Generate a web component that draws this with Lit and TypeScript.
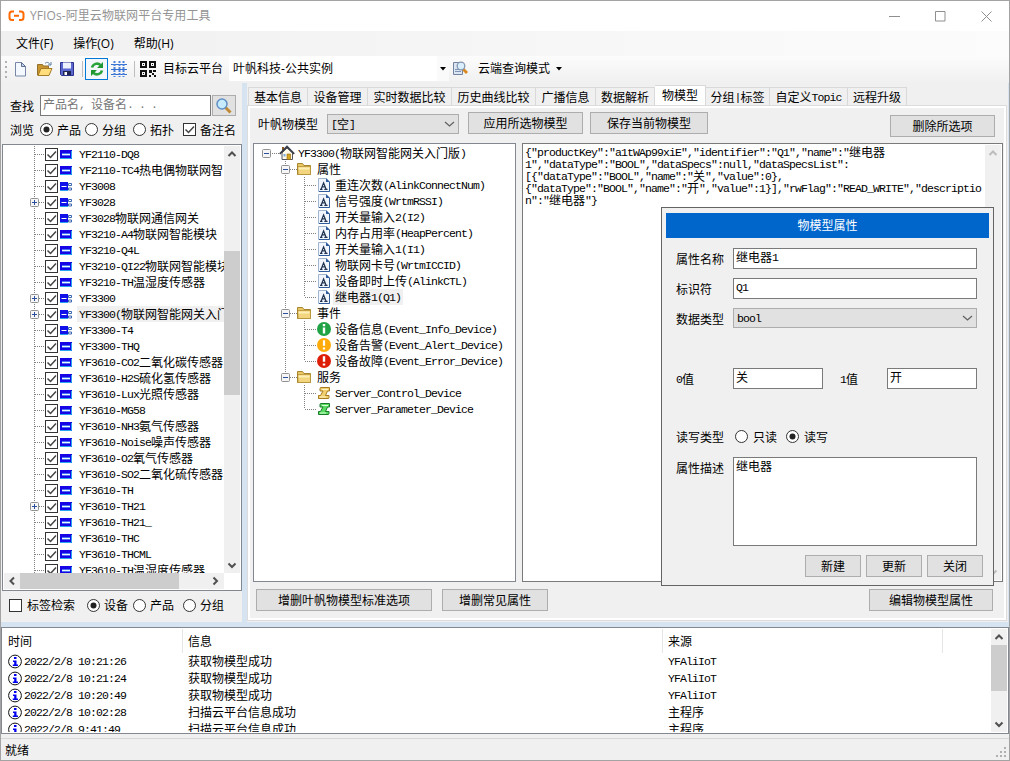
import { LitElement, html, css, svg, nothing } from "lit";
import { customElement } from "lit/decorators.js";
import { classMap } from "lit/directives/class-map.js";

// Splits a caption in Latin and Chinese runs, so Latin glyphs keep half the width of a Chinese one.
const t = (s: string) =>
  s.split(/([\x20-\x7e]+)/).filter(Boolean).map((p) =>
    /^[\x20-\x7e]/.test(p) ? html`<span class="m">${p}</span>` : p);

type Dev = [string, number?, boolean?, boolean?]; // name, gateway icon, expandable, selected
const devices: Dev[] = [
  ["YF2110-DQ8"], ["YF2110-TC4热电偶物联网智"], ["YF3008", 1], ["YF3028", 1, true],
  ["YF3028物联网通信网关", 1], ["YF3210-A4物联网智能模块"], ["YF3210-Q4L"],
  ["YF3210-QI22物联网智能模块"], ["YF3210-TH温湿度传感器"], ["YF3300", 1, true],
  ["YF3300(物联网智能网关入门", 1, true, true], ["YF3300-T4", 1], ["YF3300-THQ"],
  ["YF3610-CO2二氧化碳传感器"], ["YF3610-H2S硫化氢传感器"], ["YF3610-Lux光照传感器"],
  ["YF3610-MG58"], ["YF3610-NH3氨气传感器"], ["YF3610-Noise噪声传感器"], ["YF3610-O2氧气传感器"],
  ["YF3610-SO2二氧化硫传感器"], ["YF3610-TH"], ["YF3610-TH21", 0, true], ["YF3610-TH21_"],
  ["YF3610-THC"], ["YF3610-THCML"], ["YF3610-TH温湿度传感器"],
];

interface Node { level: number; icon: string; text: string; last?: boolean; sel?: boolean; tail?: boolean }
const nodes: Node[] = [
  { level: 0, icon: "home", text: "YF3300(物联网智能网关入门版)" },
  { level: 1, icon: "folder", text: "属性" },
  ...["重连次数(AlinkConnectNum)", "信号强度(WrtmRSSI)", "开关量输入2(I2)", "内存占用率(HeapPercent)",
    "开关量输入1(I1)", "物联网卡号(WrtmICCID)", "设备即时上传(AlinkCTL)"].map((text) => ({ level: 2, icon: "attr", text })),
  { level: 2, icon: "attr", text: "继电器1(Q1)", last: true, sel: true },
  { level: 1, icon: "folder", text: "事件" },
  { level: 2, icon: "info", text: "设备信息(Event_Info_Device)" },
  { level: 2, icon: "alert", text: "设备告警(Event_Alert_Device)" },
  { level: 2, icon: "error", text: "设备故障(Event_Error_Device)", last: true },
  { level: 1, icon: "folder", text: "服务", last: true },
  { level: 2, icon: "scroll", text: "Server_Control_Device", tail: true },
  { level: 2, icon: "scrollg", text: "Server_Parameter_Device", last: true, tail: true },
];

const tabs: [string, number][] = [["基本信息", 60], ["设备管理", 60], ["实时数据比较", 84], ["历史曲线比较", 84],
  ["广播信息", 60], ["数据解析", 59], ["物模型", 51], ["分组|标签", 64], ["自定义Topic", 78], ["远程升级", 59]];

const json = [
  `{"productKey":"a1tWAp99xiE","identifier":"Q1","name":"继电器`,
  `1","dataType":"BOOL","dataSpecs":null,"dataSpecsList":`,
  `[{"dataType":"BOOL","name":"关","value":0},`,
  `{"dataType":"BOOL","name":"开","value":1}],"rwFlag":"READ_WRITE","descriptio`,
  `n":"继电器"}`,
];

const log = [
  ["2022/2/8 10:21:26", "获取物模型成功", "YFAliIoT"],
  ["2022/2/8 10:21:24", "获取物模型成功", "YFAliIoT"],
  ["2022/2/8 10:20:49", "获取物模型成功", "YFAliIoT"],
  ["2022/2/8 10:02:28", "扫描云平台信息成功", "主程序"],
  ["2022/2/8 9:41:49", "扫描云平台信息成功", "主程序"],
];

const box = (x: number, plus: boolean) => svg`
  <rect x=${x + 0.5} y="4.5" width="8" height="8" rx="1" fill="#f6f6f6" stroke="#919191"/>
  <path d="M${x + 2} 8.5h5${plus ? `M${x + 4.5} 6v5` : ""}" stroke="#2b4f9e"/>`;
const dots = (d: string) => svg`<path d=${d} stroke="#808080" stroke-dasharray="1 1" fill="none"/>`;

const attrIcon = svg`<path d="M1.500 1.500h7.500l3.500 3.500v9.500h-11z" fill="#f1f6fe" stroke="#9fb4d0"/>
  <path d="M9 1l4 4h-4z" fill="#2d5a9b"/><path d="M12.500 5v9.500h-10.500" fill="none" stroke="#2f5c99"/>
  <path d="M3 12.300h2.500M7.300 12.300h3.200M4.200 12L6.600 5.800 9 12M5.300 9.800h2.500" fill="none" stroke="#20324f" stroke-width="1.200"/>`;
const icons: Record<string, unknown> = {
  home: svg`<path d="M3 2h2v4h-2z" fill="#8a5a20"/><path d="M3 8v6.500h10.500V8L8 3z" fill="#fffbe8" stroke="#55555f"/>
    <path d="M.8 8.800L8 1.500l7.200 7.300" fill="none" stroke="#3b3f4a" stroke-width="1.800"/>
    <path d="M8 9h3.500v5.500H8z" fill="#d8a520" stroke="#8b6510" stroke-width=".6"/><path d="M4.500 9h2v2.500h-2z" fill="#78a9d8"/>`,
  folder: svg`<path d="M.5 4V2.500h5l1.500 2h6.500v9h-13z" fill="#e9c765" stroke="#a8852f"/><path d="M1 5.500h12.500v8H1z" fill="#f4d57f" stroke="#b08b2f" stroke-width=".7"/><path d="M1.500 6.500h11v2h-11z" fill="#fdeeb4"/>`,
  attr: attrIcon,
  info: svg`<circle cx="7" cy="8" r="7" fill="#1fa345"/><path d="M7 3v2.200M7 6.500v6" stroke="#fff" stroke-width="2.400"/>`,
  alert: svg`<circle cx="7" cy="8" r="7" fill="#ffab0a"/><path d="M7 3.200v5.600M7 10.500v2" stroke="#fff" stroke-width="2.200"/>`,
  error: svg`<circle cx="7" cy="8" r="7" fill="#de1d07"/><path d="M7 3.200v5.600M7 10.500v2" stroke="#fff" stroke-width="2.400"/>`,
  scroll: svg`<path d="M3 3.500q0-1 1-1h8.500v3.500h-2l-2 4.500H12v2q0 1-1 1H1.500v-3h2L6 6H3z" fill="#f1cf70" stroke="#a77a20"/><path d="M5 4.500h6M3 12h6" stroke="#fff4c4"/>`,
  scrollg: svg`<path d="M3 3.500q0-1 1-1h8.500v3.500h-2l-2 4.500H12v2q0 1-1 1H1.500v-3h2L6 6H3z" fill="#58dd62" stroke="#187a28"/><path d="M5 4.500h6M3 12h6" stroke="#d8ffd8"/>`,
};

const chev = (dir: string, color = "#505050") => {
  const d = { up: "M4.500 10l3.500-3.500 3.500 3.500", down: "M4.500 6.500l3.500 3.500 3.500-3.500", left: "M10 4.500l-3.500 3.500 3.500 3.500", right: "M6.500 4.500l3.500 3.500-3.500 3.500" }[dir];
  return html`<svg width="16" height="16"><path d=${d!} fill="none" stroke=${color} stroke-width="2"/></svg>`;
};

@customElement("app-root")
export class AppRoot extends LitElement {
  static styles = css`
    * { box-sizing: border-box; }
    :host { display: block; width: 1010px; height: 761px; overflow: hidden; color: #000;
      font: 12px/16px "Noto Sans CJK SC", sans-serif; white-space: nowrap; }
    svg { display: block; flex: none; }
    .m { font-family: "Liberation Mono", monospace; font-size: 11.5px; letter-spacing: -0.9px; line-height: 0; vertical-align: 1px; white-space: pre; }
    .win { display: flex; flex-direction: column; height: 761px; border: 1px solid #a3a3a3; background: #f0f0f0; }
    .title { display: flex; flex: none; height: 30px; background: #fff; color: #949494; align-items: center; padding-left: 7px; }
    .title .cap { margin-left: 5px; flex: 1; font-family: "Open Sans", "Noto Sans CJK SC", sans-serif; letter-spacing: 0.08px; }
    .title .ctl { width: 46px; display: flex; justify-content: center; }
    .ui { font-family: "Open Sans", "Noto Sans CJK SC", sans-serif; }
    .menu { display: flex; flex: none; height: 25px; align-items: center; padding-left: 15px; background: linear-gradient(90deg, #f0f0f0, #fcfcfc); }
    .menu span { margin-right: 20px; }
    .bar { display: flex; flex: none; height: 27px; align-items: center; padding: 0 0 2px 3px; background: linear-gradient(#fcfcfc, #f0f0f0); }
    .sep { width: 1px; height: 16px; background: #bdbdbd; }
    .toggle { width: 23px; height: 22px; border: 1px solid #0078d7; background: #f3f6fa; display: flex; align-items: center; justify-content: center; margin: 0 3px 0 2px; }
    .target { width: 208px; height: 25px; background: #fff; padding: 5px 0 0 4px; margin-left: 6px; }
    .dd { width: 12px; height: 25px; background: #fafafa; display: flex; align-items: center; justify-content: center; }
    .main { display: flex; flex: none; height: 539px; background: #d6e3f1; }
    .left { width: 241px; background: #f0f0f0; height: 539px; padding: 12px 0 0 1px; }
    .row { display: flex; align-items: center; }
    .find { height: 21px; padding-left: 8px; }
    .find .in { width: 171px; height: 21px; border: 1px solid #7a7a7a; background: #fff; margin-left: 6px; padding: 0 2px; color: #777; }
    .find .go { width: 24px; height: 21px; border: 1px solid #adadad; background: #e1e1e1; margin-left: 1px; display: flex; justify-content: center; align-items: center; }
    .opts { height: 17px; margin-top: 5px; padding-left: 8px; }
    .treebox { width: 240px; height: 447px; margin-top: 6px; border: 1px solid #828790; background: #fff; padding: 1px; }
    .treetop { display: flex; height: 427px; overflow: hidden; }
    .rows { width: 220px; overflow: hidden; }
    .tr { display: flex; height: 16px; align-items: center; }
    .lab { height: 16px; line-height: 15px; padding: 0 2px; flex: none; }
    .sel { background: #f0f0f0; }
    .grow { flex: 1 0 auto; }
    .vs { width: 16px; background: #f0f0f0; display: flex; flex-direction: column; justify-content: space-between; }
    .track { flex: 1; }
    .thumb { background: #cdcdcd; }
    .hs { display: flex; height: 16px; width: 220px; background: #f0f0f0; }
    .foot { height: 28px; padding-left: 7px; }
    .right { margin-left: 5px; width: 761px; height: 539px; background: #f0f0f0; padding-top: 2px; display: flex; flex-direction: column; }
    .tabs { display: flex; align-items: flex-end; height: 20px; padding-left: 1px; }
    .tab { height: 18px; border: 1px solid #d9d9d9; border-left-width: 0; border-bottom: 0; text-align: center; line-height: 17px; }
    .tab:first-child { border-left-width: 1px; }
    .tab.on { height: 20px; background: #fff; line-height: 17px; }
    .page { width: 760px; height: 516px; border: 1px solid #dcdcdc; background: #f0f0f0; box-shadow: inset 0 0 0 2px #fff; padding: 6px 3px 0 5px; }
    .tools { display: flex; height: 31px; padding-left: 5px; align-items: flex-start; }
    .lbl { line-height: 24px; width: 69px; }
    .combo { display: flex; justify-content: space-between; align-items: center; border: 1px solid #adadad; background: #e1e1e1; padding-left: 3px; }
    .pick { width: 132px; height: 20px; margin-top: 2px; }
    .btn { border: 1px solid #adadad; background: #e1e1e1; display: flex; align-items: center; justify-content: center; height: 22px; }
    .w115 { width: 115px; margin: 0 7px 0 9px; } .w118 { width: 118px; } .w105 { width: 105px; margin: 3px 0 0 182px; }
    .w176 { width: 176px; } .w106 { width: 106px; margin-left: 10px; } .w124 { width: 124px; margin-left: 321px; }
    .panes { display: flex; gap: 6px; height: 439px; }
    .mtree { width: 263px; border: 1px solid #828790; background: #fff; padding: 1px; }
    .code { width: 481px; border: 1px solid #7a7a7a; background: #fff; display: flex; padding: 1px; }
    .src { width: 462px; padding: 1px 0 0 1px; }
    .src div { height: 12px; line-height: 12px; }
    .acts { display: flex; padding: 7px 0 0 3px; }
    .wrapb { flex: none; background: #d6e3f1; padding-top: 5px; }
    .log { height: 107px; width: 1008px; border: 1px solid #828790; background: #fff; display: flex; padding: 1px; }
    .grid { flex: 1; overflow: hidden; height: 103px; }
    .hd, .lr { display: grid; grid-template-columns: 180px 480px 280px; }
    .hd { height: 24px; line-height: 23px; }
    .hd div { border-right: 1px solid #e5e5e5; padding-left: 5px; }
    .lr { height: 17px; padding-left: 5px; }
    .lr div { display: flex; align-items: center; height: 16px; }
    .lr span { line-height: 16px; }
    .lr span.m { line-height: 0; }
    .status { flex: 1; min-height: 0; margin-top: 4px; border-top: 1px solid #d7d7d7; display: flex; justify-content: space-between; padding-left: 4px; line-height: 21px; }
    .dlg { position: absolute; left: 661px; top: 207px; width: 333px; height: 379px; border: 1px solid #646464; background: #f0f0f0; padding: 5px 4px; }
    .dh { height: 25px; width: 323px; background: #06c; color: #fff; text-align: center; line-height: 23px; margin-bottom: 10px; }
    .f { display: flex; height: 21px; margin-bottom: 9px; padding-left: 10px; }
    .f .k { width: 57px; line-height: 21px; }
    .f .k.n { width: 47px; margin-left: 17px; }
    .f .v { border: 1px solid #7a7a7a; background: #fff; width: 244px; padding: 0 2px; line-height: 16px; }
    .f .combo { width: 244px; height: 20px; padding-right: 1px; }
    .f .v.s { width: 90px; }
    .f.gap { margin-top: 39px; margin-bottom: 37px; }
    .f.rad { align-items: center; margin-bottom: 10px; }
    .f .big { height: 89px; }
    .f.tall { height: 89px; }
    .ok { display: flex; gap: 5px; margin: 0 0 0 139px; }
    .ok .btn { width: 56px; }
  `;

  radio(on: boolean) {
    return html`<svg width="13" height="13"><circle cx="6.500" cy="6.500" r="6" fill="#fff" stroke="#333"/>${on ? svg`<circle cx="6.500" cy="6.500" r="3" fill="#222"/>` : nothing}</svg>`;
  }
  check(on: boolean) {
    return html`<svg width="13" height="13"><rect x=".5" y=".5" width="12" height="12" fill="#fff" stroke="#333"/>${on ? svg`<path d="M2.500 6.500l3 3 5.500-6" fill="none" stroke="#444" stroke-width="1.500"/>` : nothing}</svg>`;
  }
  gap(w: number) { return html`<svg width=${w} height="1"></svg>`; }

  device([name, gw, plus, sel]: Dev) {
    return html`<div class="tr">
      <svg width="41" height="16">${dots("M30.500 0v16M31 8.500h10")}${plus ? box(26, true) : nothing}</svg>
      ${this.check(true)}
      <svg width="19" height="16">${gw
        ? svg`<path d="M2 4h8v9H2z" fill="#1010e8"/><path d="M3.500 8.500h5" stroke="#fff"/><path d="M2 12.500h8" stroke="#28a0f0"/><path d="M10.500 5.500h3v2h-3zM10.500 10h3v2h-3z" fill="#fff" stroke="#3b66b0"/>`
        : svg`<path d="M2 4h12v9H2z" fill="#1404e6"/><path d="M2 12.500h11.500V5" fill="none" stroke="#2aa5f2"/><path d="M4 7.500h8v2H4z" fill="#7fd8ff"/><path d="M4 8.500h8" stroke="#e9fbff"/>`}</svg>
      <div class=${classMap({ lab: true, sel: !!sel, grow: !!sel })}>${t(name)}</div></div>`;
  }

  node(n: Node) {
    const w = [24, 42, 62][n.level];
    const guide = n.level === 0 ? [dots("M17 8.500h8"), box(7, false)]
      : n.level === 1 ? [dots(`M30.500 0v${n.last ? 8 : 16}M35 8.500h7`), box(26, false)]
      : [n.tail ? nothing : dots("M30.500 0v16"), dots(`M49.500 0v${n.last ? 8 : 16}M50 8.500h11`)];
    // The branch ends above the service group, so its children draw no outer guide.
    const outer = n.text === "Server_Parameter_Device" ? [dots("M49.500 0v8M50 8.500h11")] : guide;
    return html`<div class="tr"><svg width=${w} height="16">${outer}</svg>
      <svg width=${[17, 18, 16][n.level]} height="16">${icons[n.icon]}</svg>
      <div class=${classMap({ lab: true, sel: !!n.sel })}>${t(n.text)}</div></div>`;
  }

  toolbar() {
    return html`<div class="bar">
      <svg width="10" height="20"><path d="M2 2v17" stroke="#b0b0b0" stroke-width="2" stroke-dasharray="2 3"/></svg>
      <svg width="16" height="18"><path d="M1.500 2.500h6l4 4v9.500h-10z" fill="#f4f8ff" stroke="#7787a5"/><path d="M7.500 2.500v4h4z" fill="#c9d6ee" stroke="#5c6f96"/></svg>
      ${this.gap(6)}
      <svg width="18" height="18"><path d="M1.500 15V4.500h5l1 1.500h5v9z" fill="#c9952e" stroke="#93702d"/><path d="M2 15.500L5 8.500h11l-3 7z" fill="#ffdc7c" stroke="#a47b27"/><path d="M9 3.500c2-2 4-1 5 1m1-2.500v3h-3" fill="none" stroke="#5b7ea8"/></svg>
      ${this.gap(5)}
      <svg width="17" height="18"><path d="M1.500 2.500h13v13h-12l-1-1z" fill="#5a68cf" stroke="#2b328c"/><path d="M4 2.500h8v6H4z" fill="#eef1ff"/><path d="M4 11h8v4H4z" fill="#20264f"/><path d="M5.500 12h2.500v3H5.500z" fill="#fff"/></svg>
      ${this.gap(6)}<div class="sep"></div>
      <div class="toggle"><svg width="16" height="16"><path d="M3 6.500a5.200 5.200 0 0 1 8.500-2.500M13 9.500a5.200 5.200 0 0 1-8.500 2.500" fill="none" stroke="#2ba33c" stroke-width="2.600"/><path d="M14 1v6H8zM2 15V9h6z" fill="#1f9632"/></svg></div>
      <svg width="17" height="16"><path d="M0 3.500h16M0 8.500h16M0 13.500h16" stroke="#356fd0"/><path d="M3.500 0v16M8.500 0v16M12.500 0v16" stroke="#4d82dc" stroke-width="2" stroke-dasharray="2 1"/></svg>
      ${this.gap(6)}<div class="sep"></div>${this.gap(5)}
      <svg width="16" height="16"><path d="M1 1h5v5H1zM10 1h5v5h-5zM1 10h5v5H1z" fill="none" stroke="#111" stroke-width="2"/><path d="M3 3h1v1H3zM12 3h1v1h-1zM3 12h1v1H3zM9 9h3v3H9zM13 9h3v2h-3zM12 12h2v2h-2zM9 14h2v2H9zM14 14h2v2h-2z" fill="#111"/></svg>
      ${this.gap(7)}<span class="ui">目标云平台</span>
      <div class="target ui">叶帆科技-公共实例</div>
      <div class="dd"><svg width="6" height="4"><path d="M0 0h6L3 3.500z" /></svg></div>
      ${this.gap(3)}
      <svg width="17" height="18"><path d="M1.500 2.500h9v12h-9z" fill="#dce6f3" stroke="#7183a0"/><path d="M3 9.500h5M3 11.500h6" stroke="#7f93b5"/><path d="M11 9l4 4" stroke="#d98a22" stroke-width="3"/><circle cx="9" cy="6" r="3.800" fill="#d9efff" stroke="#8797ae" stroke-width="1.300"/></svg>
      ${this.gap(9)}<span class="ui">云端查询模式</span>${this.gap(6)}
      <svg width="6" height="4"><path d="M0 0h6L3 3.500z"/></svg>
    </div>`;
  }

  dialog() {
    return html`<div class="dlg">
      <div class="dh">物模型属性</div>
      <div class="f"><span class="k">属性名称</span><div class="v">${t("继电器1")}</div></div>
      <div class="f"><span class="k">标识符</span><div class="v">${t("Q1")}</div></div>
      <div class="f"><span class="k">数据类型</span><div class="combo"><span>${t("bool")}</span>
        <svg width="15" height="10"><path d="M3 3l4.500 4 4.500-4" fill="none" stroke="#606060" stroke-width="1.200"/></svg></div></div>
      <div class="f gap"><span class="k">${t("0值")}</span><div class="v s">关</div><span class="k n">${t("1值")}</span><div class="v s">开</div></div>
      <div class="f rad"><span class="k">读写类型</span>${this.gap(2)}${this.radio(false)}${this.gap(5)}<span>只读</span>${this.gap(9)}${this.radio(true)}${this.gap(5)}<span>读写</span></div>
      <div class="f tall"><span class="k">属性描述</span><div class="v big">继电器</div></div>
      <div class="ok"><div class="btn">新建</div><div class="btn">更新</div><div class="btn">关闭</div></div>
    </div>`;
  }

  render() {
    return html`<div class="win">
      <div class="title"><svg width="17" height="12"><path d="M6 1.500H4Q1.500 1.500 1.500 4v3.500Q1.500 10 4 10h2M11 1.500h2q2.500 0 2.500 2.500v3.500q0 2.500-2.500 2.500h-2M6 5.700h5" fill="none" stroke="#ff6a00" stroke-width="2"/></svg>
        <span class="cap">YFIOs-阿里云物联网平台专用工具</span>
        <div class="ctl"><svg width="11" height="11"><path d="M0 5.500h11" stroke="#8f8f8f"/></svg></div>
        <div class="ctl"><svg width="11" height="11"><path d="M.5.5h9.500v9.500H.5z" fill="none" stroke="#8f8f8f"/></svg></div>
        <div class="ctl"><svg width="11" height="11"><path d="M.5.5l10 10m0-10l-10 10" stroke="#8f8f8f"/></svg></div>
      </div>
      <div class="menu ui"><span>文件(F)</span><span>操作(O)</span><span>帮助(H)</span></div>
      ${this.toolbar()}
      <div class="main">
        <div class="left">
          <div class="row find"><span>查找</span><div class="in">产品名<span class="m">, </span>设备名<span class="m">. . .</span></div>
            <div class="go"><svg width="18" height="18"><path d="M10.500 10.500l5 5" stroke="#c08a35" stroke-width="3"/><circle cx="7" cy="7" r="5" fill="#c6ebff" stroke="#5f8fc4" stroke-width="1.500"/></svg></div></div>
          <div class="row opts"><span>浏览</span>${this.gap(6)}${this.radio(true)}${this.gap(4)}<span>产品</span>${this.gap(4)}${this.radio(false)}${this.gap(4)}<span>分组</span>${this.gap(7)}${this.radio(false)}${this.gap(4)}<span>拓扑</span>${this.gap(9)}${this.check(true)}${this.gap(4)}<span>备注名</span></div>
          <div class="treebox">
            <div class="treetop"><div class="rows">${devices.map((d) => this.device(d))}</div>
              <div class="vs">${chev("up")}<div class="track">${this.gap(1)}<div class="thumb" style="height:144px;margin-top:88px"></div></div>${chev("down")}</div></div>
            <div class="hs">${chev("left")}<div class="thumb" style="width:159px"></div>${this.gap(28)}${chev("right")}</div>
          </div>
          <div class="row foot">${this.check(false)}${this.gap(5)}<span>标签检索</span>${this.gap(12)}${this.radio(true)}${this.gap(4)}<span>设备</span>${this.gap(5)}${this.radio(false)}${this.gap(4)}<span>产品</span>${this.gap(9)}${this.radio(false)}${this.gap(4)}<span>分组</span></div>
        </div>
        <div class="right">
          <div class="tabs">${tabs.map(([n, w], i) => html`<div class=${classMap({ tab: true, on: i === 6 })} style="width:${w}px">${t(n)}</div>`)}</div>
          <div class="page">
            <div class="tools"><span class="lbl">叶帆物模型</span>
              <div class="combo pick"><span>${t("[")}空${t("]")}</span><svg width="15" height="10"><path d="M2 3l4.500 4L11 3" fill="none" stroke="#606060" stroke-width="1.200"/></svg></div>
              <div class="btn w115">应用所选物模型</div><div class="btn w118">保存当前物模型</div><div class="btn w105">删除所选项</div></div>
            <div class="panes">
              <div class="mtree">${nodes.map((n) => this.node(n))}</div>
              <div class="code"><div class="src">${json.map((l) => html`<div>${t(l)}</div>`)}</div>
                <div class="vs">${chev("up", "#bdbdbd")}${chev("down", "#bdbdbd")}</div></div>
            </div>
            <div class="acts"><div class="btn w176">增删叶帆物模型标准选项</div><div class="btn w106">增删常见属性</div><div class="btn w124">编辑物模型属性</div></div>
          </div>
        </div>
      </div>
      <div class="wrapb"><div class="log">
        <div class="grid">
          <div class="hd"><div>时间</div><div>信息</div><div>来源</div></div>
          ${log.map(([a, b, c]) => html`<div class="lr"><div><svg width="16" height="15"><circle cx="7" cy="7.500" r="6.400" fill="#fff" stroke="#111"/><path d="M6 3h2.500v2H6zM5 6.500h3.500v4H10V12H4.800v-1.500h1.400V8H5z" fill="#0000f0"/></svg><span>${t(a)}</span></div><div><span>${t(b)}</span></div><div><span>${t(c)}</span></div></div>`)}
        </div>
        <div class="vs">${chev("up")}<div class="track"><div class="thumb" style="height:46px"></div></div>${chev("down")}</div>
      </div></div>
      <div class="status"><span>就绪</span><svg width="14" height="20"><path d="M9 8h2v2H9zM9 12h2v2H9zM9 16h2v2H9zM5 12h2v2H5zM5 16h2v2H5zM1 16h2v2H1z" fill="#b0b0b0"/></svg></div>
      ${this.dialog()}
    </div>`;
  }
}
